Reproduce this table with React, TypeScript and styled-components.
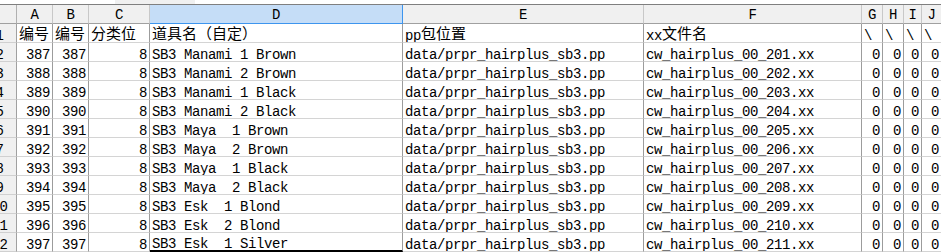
import { createGlobalStyle, styled } from "styled-components";

const GlobalStyle = createGlobalStyle`
  body {
    margin: 0;
    background: #ffffff;
  }
`;

const COLS = "17px 36px 36px 61px 253px 241px 218px 21px 21px 18px 20px";

const Sheet = styled.div`
  width: 941px;
  height: 252px;
  overflow: hidden;
  font-family: "Liberation Mono", "Noto Sans CJK SC", monospace;
  font-size: 14px;
  letter-spacing: -0.4px;
  color: #000;
`;

const FormulaStrip = styled.div`
  display: flex;
  height: 4px;
  overflow: hidden;
  border-bottom: 1px solid #7f7f7f;
`;

const StripBox = styled.div<{ $w?: number; $grey?: boolean; $pad?: number }>`
  flex: ${(p) => (p.$w ? `0 0 ${p.$w}px` : "1")};
  background: ${(p) => (p.$grey ? "#f0f0f0" : "#fff")};
  padding-left: ${(p) => p.$pad ?? 0}px;
  overflow: hidden;
  white-space: pre;
`;

const StripText = styled.div`
  line-height: 16px;
  margin-top: -13px;
`;

const Row = styled.div<{ $h: number }>`
  display: grid;
  grid-template-columns: ${COLS};
  height: ${(p) => p.$h}px;
`;

const Corner = styled.div`
  background: #f0f0f0;
  border-right: 1px solid #b0b0b0;
  border-bottom: 1px solid #a0a0a0;
`;

const ColHead = styled.div<{ $active?: boolean }>`
  display: flex;
  align-items: center;
  justify-content: center;
  padding-top: 2px;
  background: ${(p) => (p.$active ? "#c5ddf7" : "#f0f0f0")};
  border-right: 1px solid ${(p) => (p.$active ? "#3d95ee" : "#c8c8c8")};
  border-bottom: 1px solid ${(p) => (p.$active ? "#3d95ee" : "#a0a0a0")};
  box-sizing: border-box;
  overflow: hidden;
  white-space: nowrap;
`;

const RowHead = styled.div`
  display: flex;
  justify-content: center;
  align-items: flex-end;
  box-sizing: border-box;
  width: 34px;
  margin-left: -17px;
  background: #f0f0f0;
  border-right: 1px solid #a0a0a0;
  border-bottom: 1px solid #d0d0d0;
  line-height: 12px;
  overflow: hidden;
`;

const Cell = styled.div<{ $align?: "left" | "right"; $mark?: boolean }>`
  display: flex;
  align-items: flex-end;
  justify-content: ${(p) => (p.$align === "right" ? "flex-end" : "flex-start")};
  padding: 0 ${(p) => (p.$align === "right" ? 2 : 0)}px 0
    ${(p) => (p.$align === "right" ? 0 : 2)}px;
  box-sizing: border-box;
  border-right: 1px solid #9c9c9c;
  border-bottom: ${(p) => (p.$mark ? "2px solid #000" : "1px solid #d4d4d4")};
  line-height: 12px;
  white-space: pre;
  overflow: hidden;
`;

const Han = styled.span`
  font-size: 15px;
  letter-spacing: 0;
`;

const letters = ["A", "B", "C", "D", "E", "F", "G", "H", "I", "J"];

const names = [
  "SB3 Manami 1 Brown",
  "SB3 Manami 2 Brown",
  "SB3 Manami 1 Black",
  "SB3 Manami 2 Black",
  "SB3 Maya  1 Brown",
  "SB3 Maya  2 Brown",
  "SB3 Maya  1 Black",
  "SB3 Maya  2 Black",
  "SB3 Esk  1 Blond",
  "SB3 Esk  2 Blond",
  "SB3 Esk  1 Silver",
];

export default function App() {
  return (
    <>
      <GlobalStyle />
      <Sheet>
        <FormulaStrip>
          <StripBox $w={90} $pad={25}>
            <StripText>397</StripText>
          </StripBox>
          <StripBox $w={80} $grey />
          <StripBox $pad={2}>
            <StripText>SB3 Esk  1 Silver</StripText>
          </StripBox>
        </FormulaStrip>

        <Row $h={19}>
          <Corner />
          {letters.map((l) => (
            <ColHead key={l} $active={l === "D"}>
              {l}
            </ColHead>
          ))}
        </Row>

        <Row $h={19}>
          <RowHead>1</RowHead>
          <Cell>
            <Han>编号</Han>
          </Cell>
          <Cell>
            <Han>编号</Han>
          </Cell>
          <Cell>
            <Han>分类位</Han>
          </Cell>
          <Cell>
            <Han>道具名（自定）</Han>
          </Cell>
          <Cell>
            pp<Han>包位置</Han>
          </Cell>
          <Cell>
            xx<Han>文件名</Han>
          </Cell>
          <Cell>\</Cell>
          <Cell>\</Cell>
          <Cell>\</Cell>
          <Cell>\</Cell>
        </Row>

        {names.map((name, i) => {
          const id = 387 + i;
          const last = i === names.length - 1;
          return (
            <Row key={id} $h={19}>
              <RowHead>{i + 2}</RowHead>
              <Cell $align="right">{id}</Cell>
              <Cell $align="right">{id}</Cell>
              <Cell $align="right">8</Cell>
              <Cell $mark={last}>{name}</Cell>
              <Cell>data/prpr_hairplus_sb3.pp</Cell>
              <Cell>cw_hairplus_00_{201 + i}.xx</Cell>
              <Cell $align="right">0</Cell>
              <Cell $align="right">0</Cell>
              <Cell $align="right">0</Cell>
              <Cell $align="right">0</Cell>
            </Row>
          );
        })}
      </Sheet>
    </>
  );
}
